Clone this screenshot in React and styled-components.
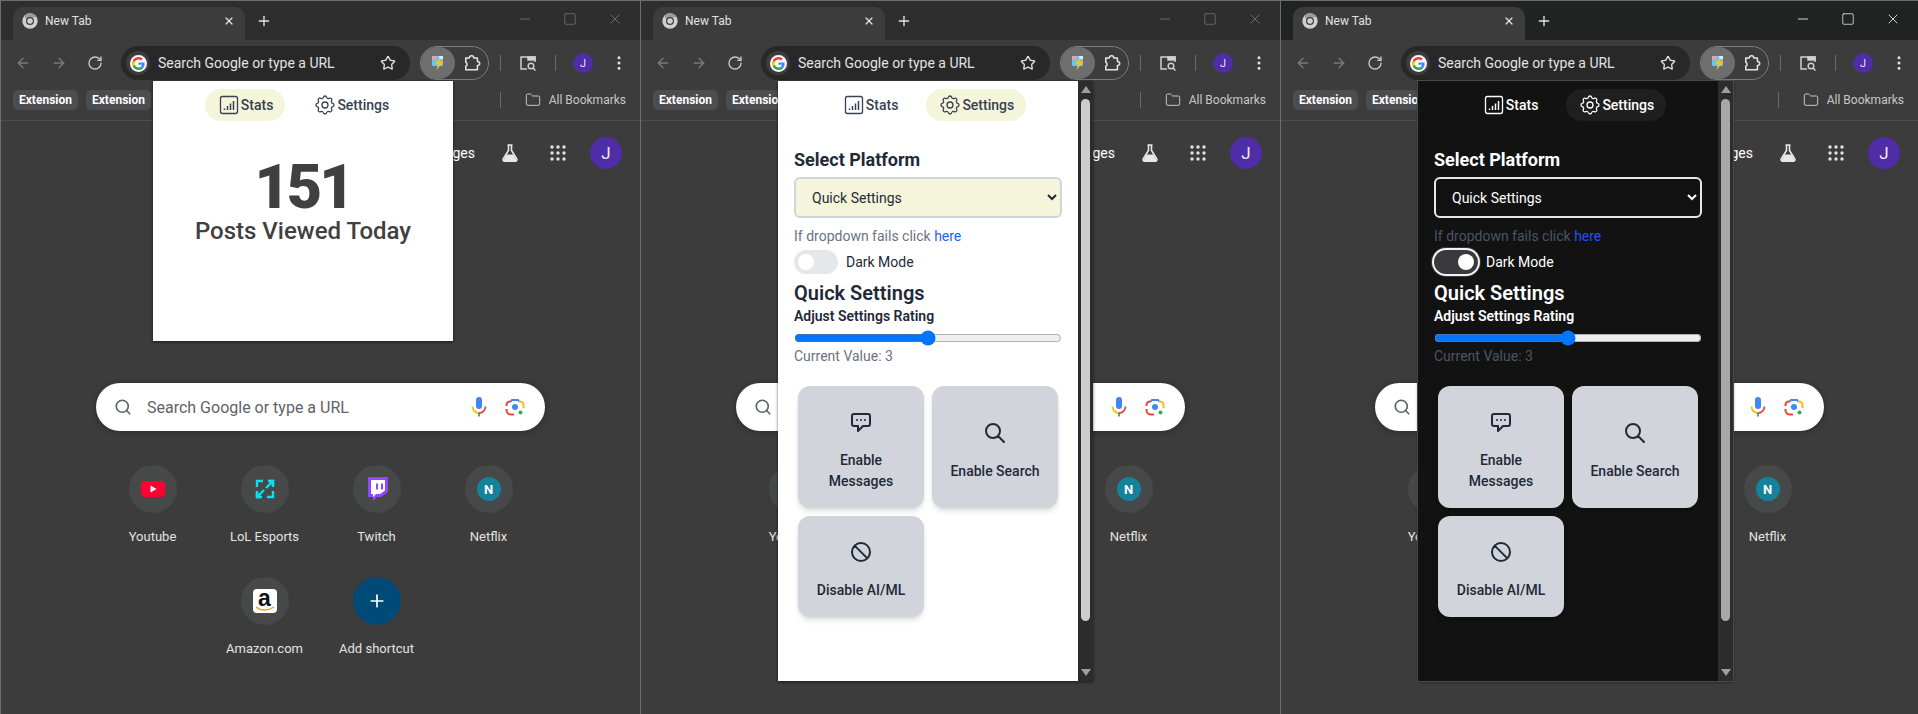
import styled, { createGlobalStyle } from "styled-components";
import { ArrowLeft, ArrowRight, RotateCw, Star, Plus, X, Minus, Square, Search, EllipsisVertical, Folder } from "lucide-react";
import { HiOutlineChatAlt, HiOutlineSearch, HiOutlineBan, HiOutlineCog } from "react-icons/hi";

const UI_FONT = `Roboto, "Noto Sans", sans-serif`;

const GlobalStyle = createGlobalStyle`
  html, body { margin: 0; padding: 0; background: #3c3c3c; }
  body { font-family: ${UI_FONT}; overflow: hidden; }
  * { box-sizing: border-box; }
`;

const Page = styled.div`
  display: flex;
  width: 1918px;
  height: 714px;
`;

const Window = styled.div`
  position: relative;
  display: flex;
  flex-direction: column;
  width: ${props => props.$width}px;
  height: 714px;
  background: #3c3c3c;
  border-top: 1px solid #6e6e6e;
  border-left: 1px solid #6e6e6e;
  overflow: hidden;
`;

const TitleBar = styled.div`
  display: flex;
  align-items: flex-end;
  height: 39px;
  flex: none;
  padding-left: 12px;
  background: ${props => (props.$focused ? "#212222" : "#2e2e2e")};
`;

const Tab = styled.div`
  display: flex;
  align-items: center;
  width: 232px;
  height: 33px;
  padding: 0 10px 5px 9px;
  border-radius: 10px 10px 0 0;
  background: #3c3c3c;
  color: #e3e3e3;
  font-size: 12px;
  gap: 7px;
`;

const TabTitle = styled.span`
  flex: 1;
`;

const NewTabButton = styled.div`
  display: flex;
  align-items: center;
  height: 33px;
  margin-left: 11px;
  padding-bottom: 6px;
  color: #e3e3e3;
`;

const WindowControls = styled.div`
  display: flex;
  align-items: center;
  gap: 30px;
  height: 39px;
  margin-left: auto;
  padding: 0 17px 3px 0;
  color: ${props => (props.$focused ? "#ffffff" : "#7c7c7c")};
`;

const Toolbar = styled.div`
  display: flex;
  align-items: center;
  height: 46px;
  flex: none;
  padding: 6px 0 6px 14px;
  border-radius: 8px 8px 0 0;
  background: #3c3c3c;
  color: #c7c7c7;
`;

const NavIcons = styled.div`
  display: flex;
  align-items: center;
  gap: 20px;
  width: 106px;
`;

const Omnibox = styled.div`
  display: flex;
  align-items: center;
  width: 289px;
  height: 34px;
  padding: 0 14px 0 5px;
  border-radius: 17px;
  background: #282828;
  color: #e3e3e3;
  font-size: 14px;
`;

const GoogleBadge = styled.div`
  display: flex;
  align-items: center;
  justify-content: center;
  width: 24px;
  height: 24px;
  margin-right: 8px;
  border-radius: 50%;
  background: #3c3c3c;
`;

const GoogleDot = styled.div`
  display: flex;
  align-items: center;
  justify-content: center;
  width: 17px;
  height: 17px;
  border-radius: 50%;
  background: #ffffff;
`;

const OmniText = styled.span`
  flex: 1;
`;

const ExtensionGroup = styled.div`
  display: flex;
  align-items: center;
  width: 69px;
  height: 34px;
  margin-left: 10px;
  border: 1px solid #7c7c7c;
  border-radius: 17px;
`;

const ActiveExtension = styled.div`
  display: flex;
  align-items: center;
  justify-content: center;
  width: 34px;
  height: 32px;
  border-radius: 17px;
  background: #6e6e6e;
`;

const PuzzleSlot = styled.div`
  display: flex;
  align-items: center;
  justify-content: center;
  flex: 1;
  padding-left: 3px;
`;

const ToolDivider = styled.div`
  width: 1px;
  height: 16px;
  flex: none;
  background: #6a6a6a;
  margin: ${props => props.$margin};
`;

const SmallAvatar = styled.div`
  display: flex;
  align-items: center;
  justify-content: center;
  width: 20px;
  height: 20px;
  border-radius: 50%;
  background: #4f2da7;
  color: #e8e0ff;
  font-size: 11px;
`;

const BookmarkBar = styled.div`
  display: flex;
  align-items: center;
  height: 35px;
  flex: none;
  padding: 0 14px 7px 12px;
  border-bottom: 1px solid #4c4c4c;
  gap: 8px;
`;

const Chip = styled.div`
  display: flex;
  align-items: center;
  justify-content: center;
  width: 65px;
  height: 20px;
  border-radius: 5px;
  background: #4c4d50;
  color: #ffffff;
  font-size: 12px;
  font-weight: 700;
`;

const AllBookmarks = styled.div`
  display: flex;
  align-items: center;
  margin-left: auto;
  gap: 8px;
  color: #c7c7c7;
  font-size: 12px;
`;

const NtpBody = styled.div`
  flex: 1;
  display: flex;
  flex-direction: column;
  align-items: center;
  background: #3c3c3c;
`;

const NtpTopRow = styled.div`
  align-self: stretch;
  display: flex;
  align-items: center;
  justify-content: flex-end;
  height: 32px;
  margin-top: 16px;
  padding-right: 18px;
  color: #ffffff;
`;

const ImagesLink = styled.span`
  margin-right: 25px;
  font-size: 14px;
`;

const AppsSlot = styled.div`
  display: flex;
  margin: 0 24px 0 30px;
`;

const NtpAvatar = styled.div`
  display: flex;
  align-items: center;
  justify-content: center;
  width: 32px;
  height: 32px;
  border-radius: 50%;
  background: #4f2da7;
  color: #f0eaff;
  font-size: 17px;
`;

const SearchBox = styled.div`
  display: flex;
  align-items: center;
  width: 449px;
  height: 48px;
  margin-top: 214px;
  padding: 0 20px 0 18px;
  border-radius: 24px;
  background: #ffffff;
  color: #5f6368;
  font-size: 16px;
  box-shadow: 0 1px 6px rgba(0, 0, 0, 0.3);
`;

const SearchPlaceholder = styled.span`
  flex: 1;
  margin-left: 15px;
`;

const LensSlot = styled.div`
  display: flex;
  margin-left: 18px;
`;

const Shortcuts = styled.div`
  display: flex;
  flex-wrap: wrap;
  justify-content: center;
  width: 448px;
  margin-top: 34px;
  row-gap: 24px;
`;

const Shortcut = styled.div`
  display: flex;
  flex-direction: column;
  align-items: center;
  width: 112px;
  height: 88px;
  color: #e3e3e3;
  font-size: 13px;
`;

const ShortcutCircle = styled.div`
  display: flex;
  align-items: center;
  justify-content: center;
  width: 48px;
  height: 48px;
  border-radius: 50%;
  background: ${props => props.$bg || "#474948"};
  margin-bottom: 16px;
`;

const LetterTile = styled.div`
  display: flex;
  align-items: center;
  justify-content: center;
  width: 24px;
  height: 24px;
  border-radius: 50%;
  background: #14829a;
  color: #ffffff;
  font-size: 13px;
  font-weight: 700;
`;

const AmazonTile = styled.div`
  position: relative;
  display: flex;
  justify-content: center;
  width: 24px;
  height: 24px;
  border-radius: 4px;
  background: #ffffff;
  color: #111111;
  font-family: "Liberation Sans", sans-serif;
  font-size: 23px;
  font-weight: 700;
  line-height: 19px;
`;

const AmazonSmile = styled.svg`
  position: absolute;
  left: 2px;
  bottom: 1px;
`;

const Popup = styled.div`
  position: absolute;
  top: 80px;
  left: ${props => props.$left}px;
  display: flex;
  width: ${props => props.$width}px;
  height: ${props => props.$height}px;
  background: ${props => (props.$dark ? "#121212" : "#ffffff")};
  color: ${props => (props.$dark ? "#ffffff" : "#1f2937")};
  box-shadow: ${props => (props.$dark ? "0 0 0 1px #4a4a4a, " : "")}0 1px 3px rgba(0, 0, 0, 0.55);
`;

const PopupContent = styled.div`
  width: 300px;
  flex: none;
  padding-top: 8px;
`;

const TabRow = styled.div`
  display: flex;
  justify-content: center;
  gap: 16px;
`;

const PopupTab = styled.div`
  display: flex;
  align-items: center;
  height: 32px;
  padding: 0 12px;
  border-radius: 16px;
  font-size: 14px;
  font-weight: 500;
  color: ${props => (props.$dark ? "#ffffff" : "#374151")};
  background: ${props => {
    if (!props.$active) return "transparent";
    return props.$dark ? "#1f1f1f" : "#f5f5dc";
  }};
`;

const IconBox = styled.span`
  display: inline-flex;
  width: 24px;
  height: 24px;
`;

const StatsBody = styled.div`
  display: flex;
  flex-direction: column;
  align-items: center;
  margin-top: 34px;
  color: #404040;
`;

const BigNumber = styled.div`
  font-size: 61px;
  line-height: 64px;
  font-weight: 900;
  letter-spacing: -3px;
`;

const StatsCaption = styled.div`
  font-size: 24px;
  line-height: 24px;
  font-weight: 500;
`;

const SettingsBody = styled.div`
  padding: 25px 16px 0 16px;
`;

const Heading = styled.h2`
  margin: 0;
  font-size: 18px;
  line-height: 28px;
  font-weight: 700;
`;

const PlatformSelect = styled.select`
  display: block;
  width: 100%;
  height: 41px;
  margin-top: 3px;
  padding: 0 12px;
  border: 2px solid ${props => (props.$dark ? "#e5e7eb" : "#d1d5db")};
  border-radius: 6px;
  background: ${props => (props.$dark ? "#121212" : "#f5f5dc")};
  color: ${props => (props.$dark ? "#ffffff" : "#1f2937")};
  font-family: ${UI_FONT};
  font-size: 14px;
  outline: none;
`;

const Hint = styled.div`
  margin-top: ${props => (props.$flush ? 0 : 8)}px;
  font-size: 14px;
  line-height: 20px;
  color: ${props => (props.$dark ? "#4b5563" : "#6b7280")};
`;

const HintLink = styled.a`
  color: ${props => (props.$dark ? "#2054f0" : "#2563eb")};
`;

const ToggleRow = styled.div`
  display: flex;
  align-items: center;
  gap: 8px;
  margin-top: 4px;
  font-size: 14px;
`;

const ToggleTrack = styled.div`
  display: flex;
  align-items: center;
  justify-content: ${props => (props.$on ? "flex-end" : "flex-start")};
  width: 44px;
  height: 24px;
  padding: 0 4px;
  border-radius: 12px;
  background: ${props => (props.$on ? "#3a3a3e" : "#e5e7eb")};
  box-shadow: ${props => (props.$on ? "0 0 0 2px #f3f4f6, 0 0 0 3px #3a3a3a" : "none")};
`;

const ToggleKnob = styled.div`
  width: 16px;
  height: 16px;
  border-radius: 50%;
  background: #ffffff;
`;

const SubHeading = styled.h2`
  margin: 5px 0 0;
  font-size: 20px;
  line-height: 28px;
  font-weight: 600;
`;

const SliderLabel = styled.div`
  margin-top: -1px;
  font-size: 14px;
  line-height: 20px;
  font-weight: 600;
`;

const RatingSlider = styled.input`
  display: block;
  width: 100%;
  height: 16px;
  margin: 4px 0 0;
`;

const CardGrid = styled.div`
  display: grid;
  grid-template-columns: 126px 126px;
  gap: 8px;
  margin-top: 20px;
  padding-left: 4px;
`;

const Card = styled.div`
  display: flex;
  flex-direction: column;
  align-items: center;
  justify-content: center;
  padding: 24px 16px 16px;
  border-radius: 12px;
  background: #d1d5db;
  color: #1f2937;
  font-size: 14px;
  line-height: 21px;
  font-weight: 500;
  text-align: center;
  box-shadow: 0 4px 6px -1px rgba(0, 0, 0, 0.12), 0 2px 4px -2px rgba(0, 0, 0, 0.1);
`;

const CardIcon = styled.span`
  display: flex;
  margin-bottom: 16px;
`;

const Scrollbar = styled.div`
  flex: 1;
  display: flex;
  flex-direction: column;
  align-items: center;
  background: #2c2c2c;
`;

const ScrollArrow = styled.div`
  width: 0;
  height: 0;
  flex: none;
  margin: ${props => (props.$down ? "auto 0 5px" : "5px 0 0")};
  border-left: 5px solid transparent;
  border-right: 5px solid transparent;
  border-${props => (props.$down ? "top" : "bottom")}: 7px solid #9e9e9e;
`;

const ScrollThumb = styled.div`
  width: 9px;
  height: 522px;
  margin-top: 6px;
  border-radius: 5px;
  background: ${props => (props.$dark ? "#a8a8a8" : "#cdcdcd")};
`;

const MenuDots = styled(EllipsisVertical)`
  margin-left: 17px;
`;

const GoogleG = ({ size = 14 }) => (
  <svg width={size} height={size} viewBox="0 0 48 48">
    <path fill="#EA4335" d="M24 9.5c3.5 0 6.7 1.2 9.2 3.6l6.9-6.9C35.9 2.4 30.5 0 24 0 14.6 0 6.5 5.4 2.6 13.2l8 6.2C12.5 13.7 17.8 9.5 24 9.5z" />
    <path fill="#4285F4" d="M46.5 24.5c0-1.6-.1-3.1-.4-4.5H24v9h12.7c-.6 2.9-2.2 5.4-4.7 7.1l7.7 6c4.5-4.2 6.8-10.3 6.8-17.6z" />
    <path fill="#FBBC05" d="M10.5 28.6c-.5-1.4-.8-3-.8-4.6s.3-3.2.8-4.6l-8-6.2C.9 16.5 0 20.1 0 24s.9 7.5 2.6 10.8l7.9-6.2z" />
    <path fill="#34A853" d="M24 48c6.5 0 11.9-2.1 15.9-5.9l-7.7-6c-2.1 1.4-4.9 2.3-8.2 2.3-6.2 0-11.5-4.2-13.4-9.8l-8 6.2C6.5 42.6 14.6 48 24 48z" />
  </svg>
);

const ChromeLogo = () => (
  <svg width="16" height="16" viewBox="0 0 24 24">
    <circle cx="12" cy="12" r="11.5" fill="#d0d0d0" />
    <path d="M12 6.5h10.4A11.5 11.5 0 0 0 3.5 4.2l4.7 8.2A5.5 5.5 0 0 1 12 6.5z" fill="#9a9a9a" />
    <circle cx="12" cy="12" r="6" fill="#3c3c3c" />
    <circle cx="12" cy="12" r="4.2" fill="#d0d0d0" />
  </svg>
);

const LightningIcon = () => (
  <svg width="16" height="18" viewBox="0 0 16 18">
    <rect x="2" y="2" width="11" height="10" rx="1" fill="#6fc5e8" />
    <rect x="2" y="2" width="4" height="3" fill="#f2a0a8" />
    <rect x="9" y="2" width="4" height="3" fill="#e8e8e8" />
    <path d="M10 3 5 10h3l-1.500 6L13 8H9.500z" fill="#f6c21c" />
  </svg>
);

const PuzzleIcon = () => (
  <svg width="20" height="20" viewBox="0 0 18 18" fill="none" stroke="#e3e3e3" strokeWidth="1.400" strokeLinejoin="round">
    <path d="M2.500 4.500h3.200c0-2.600 4-2.600 4 0h3.300v3.200c2.700 0 2.700 3.600 0 3.600v3.700H2.500v-3.200c1.600 0 1.600-3.300 0-3.300z" />
  </svg>
);

const TabSearchIcon = () => (
  <svg width="20" height="20" viewBox="0 0 20 20" fill="none" stroke="#d0d0d0" strokeWidth="1.500">
    <path d="M9 16H3V4h14v5" />
    <path d="M10 4h7v3h-7z" fill="#d0d0d0" />
    <circle cx="13" cy="13" r="2.800" />
    <path d="m15 15 2.500 2.500" />
  </svg>
);

const FlaskIcon = () => (
  <svg width="20" height="20" viewBox="0 0 20 20">
    <path d="M7.500 2h5M8.500 2v5.500L3.200 16a1.500 1.500 0 0 0 1.300 2.200h11a1.500 1.500 0 0 0 1.300-2.200l-5.300-8.500V2" fill="none" stroke="#e8e8e8" strokeWidth="1.600" />
    <path d="M6.500 11.500h7l3.500 6.700H3z" fill="#e8e8e8" />
  </svg>
);

const AppsIcon = () => (
  <svg width="16" height="16" viewBox="0 0 16 16" fill="#e3e3e3">
    {[2, 8, 14].flatMap(y => [2, 8, 14].map(x => <circle key={`${x}-${y}`} cx={x} cy={y} r="1.700" />))}
  </svg>
);

const MicIcon = () => (
  <svg width="16" height="22" viewBox="0 0 16 22" fill="none">
    <rect x="5" y="1" width="6" height="12" rx="3" fill="#4285f4" />
    <path d="M1.500 10.500a6.500 6.500 0 0 0 6.500 6.500" stroke="#fbbc05" strokeWidth="1.800" />
    <path d="M14.500 10.500a6.500 6.500 0 0 1-6.500 6.500" stroke="#ea4335" strokeWidth="1.800" />
    <path d="M8 17v3.500" stroke="#34a853" strokeWidth="1.800" />
  </svg>
);

const LensIcon = () => (
  <svg width="20" height="20" viewBox="0 0 20 20" fill="none" strokeWidth="2">
    <path d="M6 4.500H5a3.500 3.500 0 0 0-3.500 3.500v1" stroke="#ea4335" />
    <path d="M1.500 12v1A4.500 4.500 0 0 0 6 17.500h3" stroke="#ea4335" />
    <path d="M6 4.500 7 3h6l1 1.500" stroke="#4285f4" />
    <path d="M14 4.500h1A3.500 3.500 0 0 1 18.500 8v3" stroke="#fbbc05" />
    <circle cx="10" cy="10" r="3" fill="#4285f4" stroke="none" />
    <circle cx="15.500" cy="15.500" r="2" fill="#34a853" stroke="none" />
  </svg>
);

const YoutubeIcon = () => (
  <svg width="24" height="16" viewBox="0 0 24 16">
    <rect width="24" height="16" rx="4" fill="#ff0033" />
    <path d="M9.500 4.500v7l6-3.500z" fill="#ffffff" />
  </svg>
);

const EsportsIcon = () => (
  <svg width="20" height="20" viewBox="0 0 20 20" fill="none" stroke="#0ae0f0" strokeWidth="2.400">
    <path d="M8 2H2v6M12 18h6v-6M2 12v6h4M18 8V2h-4" />
    <path d="M11 9l7-7M13 2h5v5M9 11l-7 7M2 13v5h5" />
  </svg>
);

const TwitchIcon = () => (
  <svg width="22" height="24" viewBox="0 0 22 24">
    <path d="M2 0h20v15l-7 5h-4l-4 4v-4H2z" fill="#9146ff" />
    <path d="M5 3h14v10.500l-5 3.500h-4l-3 3v-3H5z" fill="#ffffff" />
    <path d="M10 6.500h2v6h-2zM15 6.500h2v6h-2z" fill="#9146ff" />
  </svg>
);

const StatsIcon = () => (
  <svg width="24" height="24" viewBox="0 0 24 24" fill="none" stroke="currentColor">
    <rect x="3.500" y="3.500" width="17" height="17" rx="2" strokeWidth="1.300" />
    <path d="M7.500 17v-1.500M10.500 17v-4M13.500 17v-6.500M16.500 17V8" strokeWidth="1.500" />
  </svg>
);

const TitleRow = ({ focused }) => (
  <TitleBar $focused={focused}>
    <Tab>
      <ChromeLogo />
      <TabTitle>New Tab</TabTitle>
      <X size={12} strokeWidth={2.500} />
    </Tab>
    <NewTabButton>
      <Plus size={16} strokeWidth={2} />
    </NewTabButton>
    <WindowControls $focused={focused}>
      <Minus size={16} strokeWidth={1.200} />
      <Square size={14} strokeWidth={1.200} />
      <X size={16} strokeWidth={1.200} />
    </WindowControls>
  </TitleBar>
);

const ChromeToolbar = () => (
  <Toolbar>
    <NavIcons>
      <ArrowLeft size={16} color="#7a7a7a" />
      <ArrowRight size={16} color="#7a7a7a" />
      <RotateCw size={16} color="#c7c7c7" />
    </NavIcons>
    <Omnibox>
      <GoogleBadge>
        <GoogleDot><GoogleG size={13} /></GoogleDot>
      </GoogleBadge>
      <OmniText>Search Google or type a URL</OmniText>
      <Star size={16} color="#e3e3e3" />
    </Omnibox>
    <ExtensionGroup>
      <ActiveExtension><LightningIcon /></ActiveExtension>
      <PuzzleSlot><PuzzleIcon /></PuzzleSlot>
    </ExtensionGroup>
    <ToolDivider $margin="0 17px 0 11px" />
    <TabSearchIcon />
    <ToolDivider $margin="0 17px 0 17px" />
    <SmallAvatar>J</SmallAvatar>
    <MenuDots size={18} color="#e3e3e3" />
  </Toolbar>
);

const Bookmarks = () => (
  <BookmarkBar>
    <Chip>Extension</Chip>
    <Chip>Extension</Chip>
    <AllBookmarks>
      <ToolDivider $margin="0 16px 0 0" />
      <Folder size={16} strokeWidth={1.500} />
      All Bookmarks
    </AllBookmarks>
  </BookmarkBar>
);

const SHORTCUTS = [
  { label: "Youtube", icon: <YoutubeIcon /> },
  { label: "LoL Esports", icon: <EsportsIcon /> },
  { label: "Twitch", icon: <TwitchIcon /> },
  { label: "Netflix", icon: <LetterTile>N</LetterTile> },
  {
    label: "Amazon.com",
    icon: (
      <AmazonTile>
        a
        <AmazonSmile width="20" height="6" viewBox="0 0 20 6" fill="none" stroke="#f79c1c" strokeWidth="1.500">
          <path d="M1 1c5 4 12 4 18 0" />
        </AmazonSmile>
      </AmazonTile>
    ),
  },
  { label: "Add shortcut", bg: "#004a77", icon: <Plus size={20} color="#ffffff" strokeWidth={2} /> },
];

const NewTabPage = () => (
  <NtpBody>
    <NtpTopRow>
      <ImagesLink>Images</ImagesLink>
      <FlaskIcon />
      <AppsSlot><AppsIcon /></AppsSlot>
      <NtpAvatar>J</NtpAvatar>
    </NtpTopRow>
    <SearchBox>
      <Search size={18} strokeWidth={2.200} color="#5f6368" />
      <SearchPlaceholder>Search Google or type a URL</SearchPlaceholder>
      <MicIcon />
      <LensSlot><LensIcon /></LensSlot>
    </SearchBox>
    <Shortcuts>
      {SHORTCUTS.map(item => (
        <Shortcut key={item.label}>
          <ShortcutCircle $bg={item.bg}>{item.icon}</ShortcutCircle>
          {item.label}
        </Shortcut>
      ))}
    </Shortcuts>
  </NtpBody>
);

const PopupTabs = ({ active, dark }) => (
  <TabRow>
    <PopupTab $active={active === "stats"} $dark={dark}>
      <IconBox><StatsIcon /></IconBox>Stats
    </PopupTab>
    <PopupTab $active={active === "settings"} $dark={dark}>
      <IconBox><HiOutlineCog size={24} strokeWidth={1.300} /></IconBox>Settings
    </PopupTab>
  </TabRow>
);

const SettingsPanel = ({ dark }) => (
  <PopupContent>
    <PopupTabs active="settings" dark={dark} />
    <SettingsBody>
      <Heading>Select Platform</Heading>
      <PlatformSelect $dark={dark} defaultValue="quick">
        <option value="quick">Quick Settings</option>
      </PlatformSelect>
      <Hint $dark={dark}>If dropdown fails click <HintLink $dark={dark}>here</HintLink></Hint>
      <ToggleRow>
        <ToggleTrack $on={dark}><ToggleKnob /></ToggleTrack>
        Dark Mode
      </ToggleRow>
      <SubHeading>Quick Settings</SubHeading>
      <SliderLabel>Adjust Settings Rating</SliderLabel>
      <RatingSlider type="range" min="1" max="5" defaultValue="3" />
      <Hint $dark={dark} $flush>Current Value: 3</Hint>
      <CardGrid>
        <Card>
          <CardIcon><HiOutlineChatAlt size={24} /></CardIcon>
          Enable Messages
        </Card>
        <Card>
          <CardIcon><HiOutlineSearch size={24} /></CardIcon>
          Enable Search
        </Card>
        <Card>
          <CardIcon><HiOutlineBan size={24} /></CardIcon>
          Disable AI/ML
        </Card>
      </CardGrid>
    </SettingsBody>
  </PopupContent>
);

const PopupScrollbar = ({ dark }) => (
  <Scrollbar>
    <ScrollArrow />
    <ScrollThumb $dark={dark} />
    <ScrollArrow $down />
  </Scrollbar>
);

const ChromeWindow = ({ width, focused, children }) => (
  <Window $width={width}>
    <TitleRow focused={focused} />
    <ChromeToolbar />
    <Bookmarks />
    <NewTabPage />
    {children}
  </Window>
);

export default function App() {
  return (
    <Page>
      <GlobalStyle />
      <ChromeWindow width={640}>
        <Popup $left={152} $width={300} $height={260}>
          <PopupContent>
            <PopupTabs active="stats" />
            <StatsBody>
              <BigNumber>151</BigNumber>
              <StatsCaption>Posts Viewed Today</StatsCaption>
            </StatsBody>
          </PopupContent>
        </Popup>
      </ChromeWindow>
      <ChromeWindow width={640}>
        <Popup $left={137} $width={315} $height={600}>
          <SettingsPanel />
          <PopupScrollbar />
        </Popup>
      </ChromeWindow>
      <ChromeWindow width={638} focused>
        <Popup $dark $left={137} $width={315} $height={600}>
          <SettingsPanel dark />
          <PopupScrollbar dark />
        </Popup>
      </ChromeWindow>
    </Page>
  );
}
